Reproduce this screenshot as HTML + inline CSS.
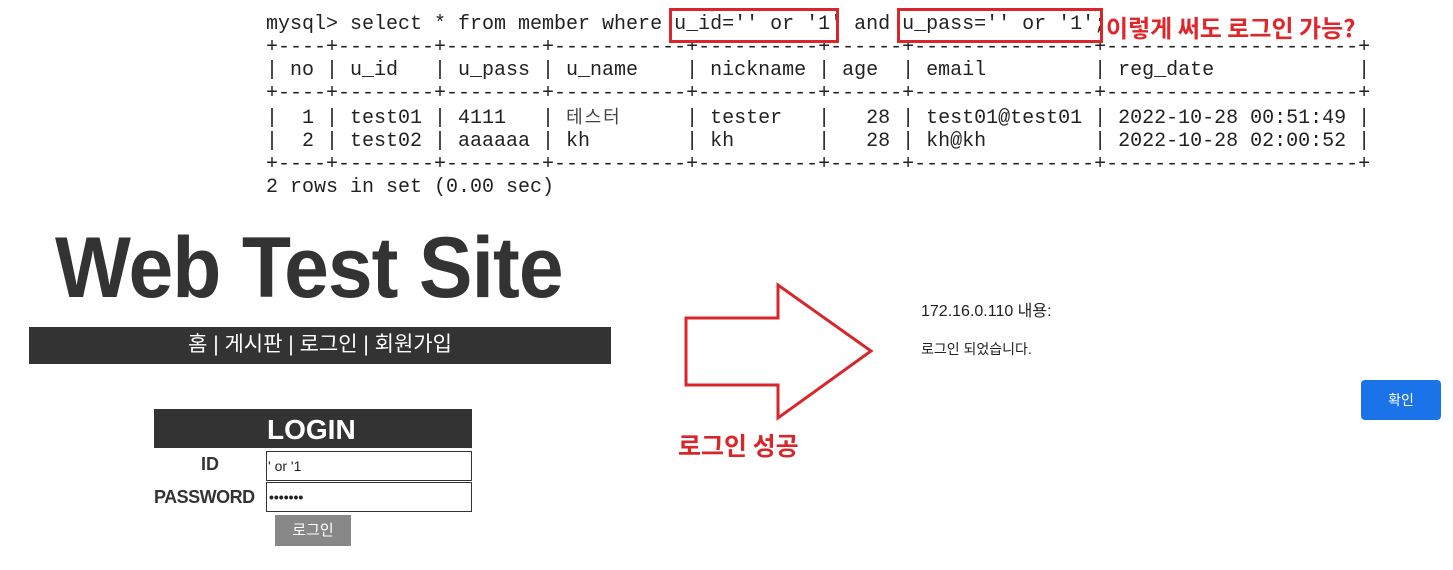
<!DOCTYPE html>
<html><head><meta charset="utf-8"><style>
body{margin:0;width:1453px;height:570px;background:#fff;position:relative;overflow:hidden;font-family:"Liberation Sans","Noto Sans CJK KR",sans-serif}
.m{position:absolute;left:266px;margin:0;font-family:"Liberation Mono","DejaVu Sans Mono","Noto Sans CJK KR",monospace;font-size:20px;line-height:23px;color:#222;white-space:pre}
.k{display:inline-block;width:72px;letter-spacing:2px;font-family:"Noto Sans CJK KR",sans-serif;font-size:18px;color:#444}
.a{position:absolute}
.box{position:absolute;border:3px solid #d9262b;box-sizing:border-box}
</style></head><body>
<pre class="m" style="top:13px">mysql&gt; select * from member where u_id='' or '1' and u_pass='' or '1';</pre>
<pre class="m" style="top:36px">+----+--------+--------+-----------+----------+------+---------------+---------------------+
| no | u_id   | u_pass | u_name    | nickname | age  | email         | reg_date            |
+----+--------+--------+-----------+----------+------+---------------+---------------------+
|  1 | test01 | 4111   | <span class="k">테스터</span>    | tester   |   28 | test01@test01 | 2022-10-28 00:51:49 |
|  2 | test02 | aaaaaa | kh        | kh       |   28 | kh@kh         | 2022-10-28 02:00:52 |
+----+--------+--------+-----------+----------+------+---------------+---------------------+
2 rows in set (0.00 sec)</pre>
<div class="box" style="left:669px;top:8px;width:170px;height:35px"></div>
<div class="box" style="left:897px;top:8px;width:206px;height:35px"></div>
<div class="a" style="left:1106px;top:12px;font-size:24px;font-weight:bold;color:#e0262b;font-family:'Noto Sans CJK KR',sans-serif;line-height:30px;background:#fff;padding-right:2px">이렇게 써도 로그인 가능?</div>

<div class="a" style="left:55px;top:218px;font-size:86px;font-weight:bold;color:#333;line-height:100px;letter-spacing:-1px;transform:scaleX(0.935);transform-origin:0 0;white-space:nowrap">Web Test Site</div>
<div class="a" style="left:29px;top:327px;width:582px;height:37px;background:#333;color:#fff;text-align:center;font-size:21px;line-height:36px">홈 | 게시판 | 로그인 | 회원가입</div>

<div class="a" style="left:154px;top:409px;width:318px;height:39px;background:#333;color:#fff;font-weight:bold;font-size:28px;line-height:42px"><span style="position:absolute;left:113px">LOGIN</span></div>
<div class="a" style="left:154px;top:454px;width:112px;text-align:center;font-weight:bold;font-size:18px;color:#333">ID</div>
<div class="a" style="left:154px;top:487px;font-weight:bold;font-size:18px;color:#333;letter-spacing:-0.5px">PASSWORD</div>
<div class="a" style="left:266px;top:451px;width:206px;height:30px;border:1px solid #333;box-sizing:border-box;font-size:14px;line-height:28px;color:#222;padding-left:1px">' or '1</div>
<div class="a" style="left:266px;top:482px;width:206px;height:30px;border:1px solid #333;box-sizing:border-box;font-size:14px;line-height:28px;color:#222;padding-left:2px;font-weight:bold">•••••••</div>
<div class="a" style="left:275px;top:515px;width:76px;height:31px;background:#888;color:#fff;text-align:center;font-size:15px;line-height:31px">로그인</div>

<svg class="a" style="left:0;top:0" width="1453" height="570"><polygon points="686,318 778,318 778,285 871,351 778,418 778,385 686,385" fill="none" stroke="#d9262b" stroke-width="3"/></svg>
<div class="a" style="left:678px;top:428px;font-size:25px;font-weight:bold;color:#d9262b;font-family:'Noto Sans CJK KR',sans-serif;line-height:34px">로그인 성공</div>

<div class="a" style="left:921px;top:301px;font-size:16px;color:#222;line-height:22px">172.16.0.110 내용:</div>
<div class="a" style="left:921px;top:339px;font-size:14px;color:#222;line-height:20px">로그인 되었습니다.</div>
<div class="a" style="left:1361px;top:380px;width:80px;height:40px;background:#1a73e8;border-radius:4px;color:#fff;text-align:center;font-size:14px;line-height:40px">확인</div>
</body></html>
